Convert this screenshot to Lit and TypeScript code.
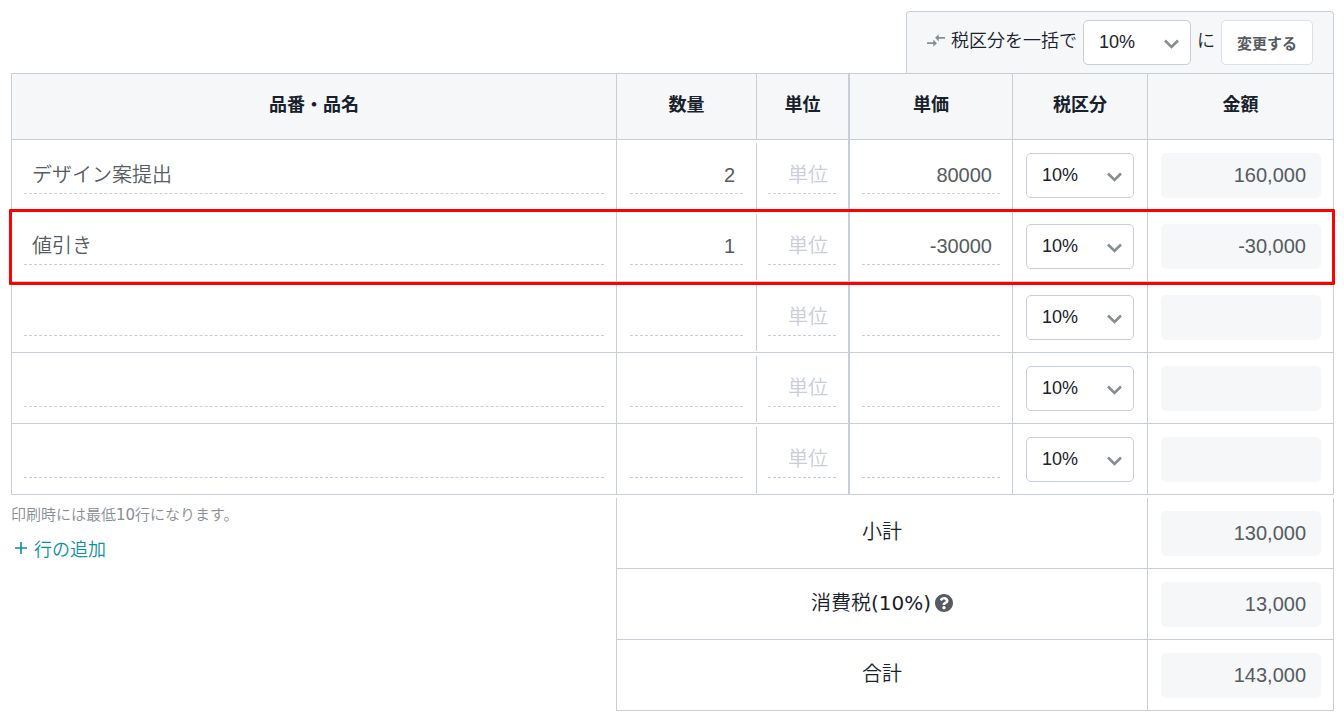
import { LitElement, html, css, svg } from "lit";
import { customElement, property, state } from "lit/decorators.js";

interface Item {
  name: string;
  quantity: string;
  price: string;
  amount: string;
  highlighted?: boolean;
}

const TAX_RATES = ["10%", "8%", "0%"];

@customElement("tax-select")
class TaxSelect extends LitElement {
  @property() label = "";

  static styles = css`
    :host {
      display: block;
      width: 108px;
    }
    .wrap {
      display: grid;
      grid-template-columns: 1fr 28px;
      align-items: center;
    }
    .select {
      grid-area: 1 / 1 / 2 / 3;
      appearance: none;
      box-sizing: border-box;
      width: 100%;
      height: 45px;
      margin: 0;
      padding: 0 32px 1px 15px;
      border: 1px solid #c8ced6;
      border-radius: 5px;
      background: #fff;
      color: #17202b;
      font: 18px "Liberation Sans", Arial, sans-serif;
    }
    .chevron {
      grid-area: 1 / 2 / 2 / 3;
      width: 16px;
      height: 12px;
      margin-top: 3px;
      pointer-events: none;
    }
  `;

  render() {
    return html`<div class="wrap">
      <select class="select" aria-label=${this.label}>
        ${TAX_RATES.map((rate) => html`<option>${rate}</option>`)}
      </select>
      <svg class="chevron" viewBox="0 0 16 12" aria-hidden="true">
        <path d="M2 2.5 L8.5 9 L15 2.5" fill="none" stroke="#868e91" stroke-width="2.6" />
      </svg>
    </div>`;
  }
}

const swapIcon = svg`
  <path d="M9.01 14H2v2h7.01v3L13 15l-3.99-4v3zm5.98-1v-3H22V8h-7.01V5L11 9l3.99 4z" />
`;

const helpIcon = svg`
  <path d="M504 256c0 136.997-111.043 248-248 248S8 392.997 8 256C8 119.083 119.043 8 256 8s248 111.083 248 248zM262.655 90c-54.497 0-89.255 22.957-116.549 63.758-3.536 5.286-2.353 12.415 2.715 16.258l34.699 26.31c5.205 3.947 12.621 3.008 16.665-2.122 17.864-22.658 30.113-35.797 57.303-35.797 20.429 0 45.698 13.148 45.698 32.958 0 14.976-12.363 22.667-32.534 33.976C247.128 238.528 216 254.941 216 296v4c0 6.627 5.373 12 12 12h56c6.627 0 12-5.373 12-12v-1.333c0-28.462 83.186-29.647 83.186-106.667 0-58.002-60.165-102-116.531-102zM256 338c-25.365 0-46 20.635-46 46 0 25.364 20.635 46 46 46s46-20.636 46-46c0-25.364-20.635-46-46-46z" />
`;

@customElement("app-root")
class AppRoot extends LitElement {
  @state() private items: Item[] = [
    { name: "デザイン案提出", quantity: "2", price: "80000", amount: "160,000" },
    { name: "値引き", quantity: "1", price: "-30000", amount: "-30,000", highlighted: true },
    { name: "", quantity: "", price: "", amount: "" },
    { name: "", quantity: "", price: "", amount: "" },
    { name: "", quantity: "", price: "", amount: "" },
  ];

  static styles = css`
    :host {
      display: block;
      box-sizing: border-box;
      padding: 11px 10px 13px 11px;
      color: #17202b;
      background: #fff;
      font-family: "Liberation Sans", "Noto Sans CJK JP", sans-serif;
      font-size: 18px;
      font-weight: 350;
      line-height: 24px;
    }
    .toolbar {
      display: flex;
      align-items: center;
      gap: 6px;
      box-sizing: border-box;
      width: fit-content;
      margin-left: auto;
      padding: 8px 20px;
      border: 1px solid #c8ced6;
      border-bottom: 0;
      border-radius: 4px 4px 0 0;
      background: #f5f7f9;
    }
    .toolbar-text {
      padding-bottom: 4px;
    }
    .swap {
      width: 18px;
      height: 13px;
      margin-bottom: 4px;
      fill: #868e91;
    }
    .apply {
      box-sizing: border-box;
      width: 92px;
      height: 45px;
      padding: 0;
      border: 1px solid #dbe1e8;
      border-radius: 5px;
      background: #fff;
      color: #555b61;
      font: bold 15px "Noto Sans CJK JP", sans-serif;
    }
    .table {
      width: 100%;
      table-layout: fixed;
      border-collapse: separate;
      border-spacing: 0;
    }
    .col-quantity { width: 140px; }
    .col-unit { width: 92px; }
    .col-price { width: 164px; }
    .col-tax { width: 135px; }
    .col-amount { width: 186px; }
    .head {
      box-sizing: border-box;
      height: 67px;
      padding: 0 0 4px;
      border: solid #c8ced6;
      border-width: 1px 1px 1px 0;
      background: #f5f7f9;
      font-weight: 700;
      text-align: center;
    }
    .cell {
      padding: 13px 12px 12px;
      border: solid #c8ced6;
      border-width: 0 1px 1px 0;
      vertical-align: top;
    }
    .head.first,
    .cell.first,
    .head.price,
    .cell.price {
      border-left-width: 1px;
    }
    .cell.quantity {
      padding: 13px 14px 12px 13px;
      border-right: 0;
      background: linear-gradient(#c8ced6, #c8ced6) right top 3px / 1px calc(100% - 4px) no-repeat;
    }
    .cell.unit {
      padding-left: 11px;
    }
    .cell.tax {
      padding-left: 13px;
      padding-right: 13px;
    }
    .cell.amount {
      padding-left: 13px;
    }
    .row {
      position: relative;
    }
    .row.highlighted .first::after {
      content: "";
      position: absolute;
      z-index: 1;
      inset: -2px -1px -3px -2px;
      border: 3px solid #f00;
      border-radius: 1px;
      pointer-events: none;
    }
    .field {
      display: block;
      box-sizing: border-box;
      width: 100%;
      height: 41px;
      margin: 0;
      padding: 0 8px;
      border: 0;
      border-bottom: 1px dashed #c8ced6;
      border-radius: 0;
      outline: 0;
      background: transparent;
      color: #555b61;
      font: 350 20px "Liberation Sans", "Noto Sans CJK JP", sans-serif;
    }
    .field.number {
      padding-top: 4px;
      text-align: right;
    }
    .field::placeholder {
      color: #c8ced6;
      opacity: 1;
    }
    .sum {
      display: block;
      box-sizing: border-box;
      width: 100%;
      height: 45px;
      margin: 0;
      padding: 0 15px;
      border: 0;
      border-radius: 5px;
      outline: 0;
      background: #f5f7f9;
      color: #555b61;
      font: 20px "Liberation Sans", Arial, sans-serif;
      text-align: right;
    }
    .bottom {
      display: grid;
      grid-template-columns: minmax(0, 1fr) 718px;
    }
    .note {
      margin: 7px 0 9px;
      color: #868e91;
      font-family: "Noto Sans CJK JP", sans-serif;
      font-size: 15px;
    }
    .latin {
      font-family: "DejaVu Sans", "Noto Sans CJK JP", sans-serif;
      font-weight: 400;
    }
    .add {
      display: flex;
      align-items: center;
      gap: 7px;
      padding: 0 0 0 4px;
      border: 0;
      background: none;
      color: #0b8fa0;
      font: 350 18px/24px "Noto Sans CJK JP", sans-serif;
    }
    .plus {
      width: 12px;
      height: 12px;
      stroke: #0b8fa0;
      stroke-width: 1.6;
    }
    .totals {
      margin-top: 3px;
    }
    .label {
      padding: 0 0 2px;
      font-size: 20px;
      font-weight: 350;
      text-align: center;
      vertical-align: middle;
    }
    .label-inner {
      display: flex;
      align-items: center;
      justify-content: center;
      gap: 4px;
    }
    .help {
      width: 18px;
      height: 18px;
      fill: #555b61;
    }
  `;

  private renderRow(item: Item, index: number) {
    const n = index + 1;
    return html`<tr class="row ${item.highlighted ? "highlighted" : ""}">
      <td class="cell first">
        <input class="field" aria-label="品番・品名 ${n}" .value=${item.name} />
      </td>
      <td class="cell quantity">
        <input class="field number" aria-label="数量 ${n}" .value=${item.quantity} />
      </td>
      <td class="cell unit">
        <input class="field number" aria-label="単位 ${n}" placeholder="単位" />
      </td>
      <td class="cell price">
        <input class="field number" aria-label="単価 ${n}" .value=${item.price} />
      </td>
      <td class="cell tax"><tax-select label="税区分 ${n}"></tax-select></td>
      <td class="cell amount">
        <input class="sum" aria-label="金額 ${n}" readonly .value=${item.amount} />
      </td>
    </tr>`;
  }

  private renderTotal(label: unknown, name: string, amount: string) {
    return html`<tr>
      <th class="cell first label" scope="row">${label}</th>
      <td class="cell amount">
        <input class="sum" aria-label=${name} readonly .value=${amount} />
      </td>
    </tr>`;
  }

  render() {
    const taxLabel = html`<span class="label-inner">
      <span>消費税<span class="latin">(10%)</span></span>
      <svg class="help" viewBox="8 8 496 496" aria-hidden="true">${helpIcon}</svg>
    </span>`;

    return html`
      <div class="toolbar">
        <svg class="swap" viewBox="2 5 20 14" aria-hidden="true">${swapIcon}</svg>
        <span class="toolbar-text">税区分を一括で</span>
        <tax-select label="税区分を一括で"></tax-select>
        <span class="toolbar-text">に</span>
        <button class="apply" type="button">変更する</button>
      </div>
      <table class="table">
        <colgroup>
          <col />
          <col class="col-quantity" />
          <col class="col-unit" />
          <col class="col-price" />
          <col class="col-tax" />
          <col class="col-amount" />
        </colgroup>
        <thead>
          <tr>
            <th class="head first" scope="col">品番・品名</th>
            <th class="head" scope="col">数量</th>
            <th class="head" scope="col">単位</th>
            <th class="head price" scope="col">単価</th>
            <th class="head" scope="col">税区分</th>
            <th class="head" scope="col">金額</th>
          </tr>
        </thead>
        <tbody>
          ${this.items.map((item, i) => this.renderRow(item, i))}
        </tbody>
      </table>
      <div class="bottom">
        <div>
          <p class="note">印刷時には最低<span class="latin">10</span>行になります。</p>
          <button class="add" type="button">
            <svg class="plus" viewBox="0 0 12 12" aria-hidden="true"><path d="M6 0 V12 M0 6 H12" /></svg>
            行の追加
          </button>
        </div>
        <table class="table totals">
          <colgroup>
            <col />
            <col class="col-amount" />
          </colgroup>
          <tbody>
            ${this.renderTotal("小計", "小計", "130,000")}
            ${this.renderTotal(taxLabel, "消費税", "13,000")}
            ${this.renderTotal("合計", "合計", "143,000")}
          </tbody>
        </table>
      </div>
    `;
  }
}
